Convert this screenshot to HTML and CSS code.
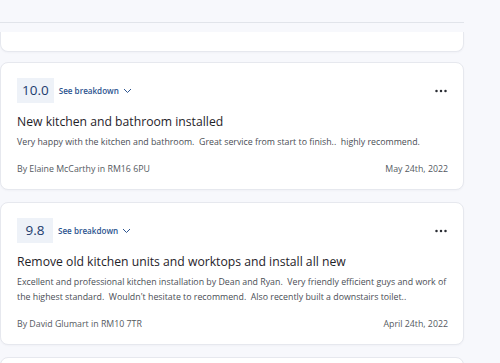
FILE: index.html
```html
<!DOCTYPE html>
<html lang="en">
<head>
    <meta charset="UTF-8">
    <meta name="viewport" content="width=device-width, initial-scale=1.0">
    <title>Reviews</title>
    <link rel="stylesheet" href="styles.css">
</head>
<body>
    <div class="page">
        <div class="top-bar">
            <div class="top-line"></div>
        </div>

        <!-- card scrolled under the header -->
        <div class="card card-cut">
            <div class="meta">
                <span>By Mark Evans in RM12 4QE</span>
                <span>May 12th, 2022</span>
            </div>
        </div>

        <div class="card">
            <div class="card-head">
                <div class="rating">
                    <span class="score">10.0</span>
                    <a class="breakdown" href="#">See breakdown
                        <svg width="9" height="6" viewBox="0 0 9 6"><path d="M1 1l3.5 3.5L8 1" fill="none" stroke="currentColor" stroke-width="1"/></svg>
                    </a>
                </div>
                <svg class="more" width="12" height="4" viewBox="0 0 12 4"><circle cx="1.5" cy="2" r="1.25"/><circle cx="6" cy="2" r="1.25"/><circle cx="10.5" cy="2" r="1.25"/></svg>
            </div>
            <h2>New kitchen and bathroom installed</h2>
            <p class="text">Very happy with the kitchen and bathroom.  Great service from start to finish..  highly recommend.</p>
            <div class="meta">
                <span>By Elaine McCarthy in RM16 6PU</span>
                <span>May 24th, 2022</span>
            </div>
        </div>

        <div class="card">
            <div class="card-head">
                <div class="rating">
                    <span class="score">9.8</span>
                    <a class="breakdown" href="#">See breakdown
                        <svg width="9" height="6" viewBox="0 0 9 6"><path d="M1 1l3.5 3.5L8 1" fill="none" stroke="currentColor" stroke-width="1"/></svg>
                    </a>
                </div>
                <svg class="more" width="12" height="4" viewBox="0 0 12 4"><circle cx="1.5" cy="2" r="1.25"/><circle cx="6" cy="2" r="1.25"/><circle cx="10.5" cy="2" r="1.25"/></svg>
            </div>
            <h2>Remove old kitchen units and worktops and install all new</h2>
            <p class="text">Excellent and professional kitchen installation by Dean and Ryan.  Very friendly efficient guys and work of the highest standard.  Wouldn't hesitate to recommend.  Also recently built a downstairs toilet..</p>
            <div class="meta">
                <span>By David Glumart in RM10 7TR</span>
                <span>April 24th, 2022</span>
            </div>
        </div>

        <div class="card card-next"></div>
    </div>
</body>
</html>
```

FILE: styles.css
```css
body {
    font-family: "Open Sans", "Liberation Sans", sans-serif;
    background-color: #f7f8fc;
    margin: 0;
    padding: 0;
    color: #222;
    overflow: hidden;
}

.page {
    width: 464px;
}

.top-bar {
    height: 32px;
}

.top-line {
    height: 22px;
    border-bottom: 1px solid #e1e4ea;
}

.card {
    background-color: #fff;
    border: 1px solid #e6e8ee;
    border-radius: 8px;
    padding: 15px 15px 13px 16px;
    margin-bottom: 12px;
    box-shadow: 0 1px 2px rgba(20, 30, 60, 0.03);
}

.card-cut {
    height: 19px;
    padding-top: 0;
    padding-bottom: 0;
    border-top: none;
    border-radius: 0 0 8px 8px;
    overflow: hidden;
    margin-bottom: 10px;
}

.card-cut .meta {
    margin-top: -12px;
}

.card-next {
    height: 40px;
}

.card-head {
    display: flex;
    justify-content: space-between;
    align-items: center;
}

.rating {
    display: flex;
    align-items: center;
    gap: 5px;
}

.score {
    background-color: #eef2f8;
    color: #1c3c6e;
    font-size: 13.5px;
    font-weight: 500;
    line-height: 25px;
    padding: 0 5px;
    min-width: 26px;
    text-align: center;
}

.breakdown {
    color: #2d548f;
    font-size: 8.1px;
    font-weight: 600;
    text-decoration: none;
    display: flex;
    align-items: center;
    gap: 4px;
}

.more {
    fill: #2a2d33;
    margin-right: 1px;
}

h2 {
    font-size: 12.2px;
    font-weight: 400;
    color: #1f2329;
    margin: 9px 0 3px;
    line-height: 20px;
}

.text {
    font-size: 8.8px;
    color: #4a4e55;
    line-height: 15px;
    margin: 0;
    white-space: pre-wrap;
}

.meta {
    display: flex;
    justify-content: space-between;
    font-size: 8.8px;
    color: #555a61;
    margin-top: 12px;
    line-height: 14px;
}
```
